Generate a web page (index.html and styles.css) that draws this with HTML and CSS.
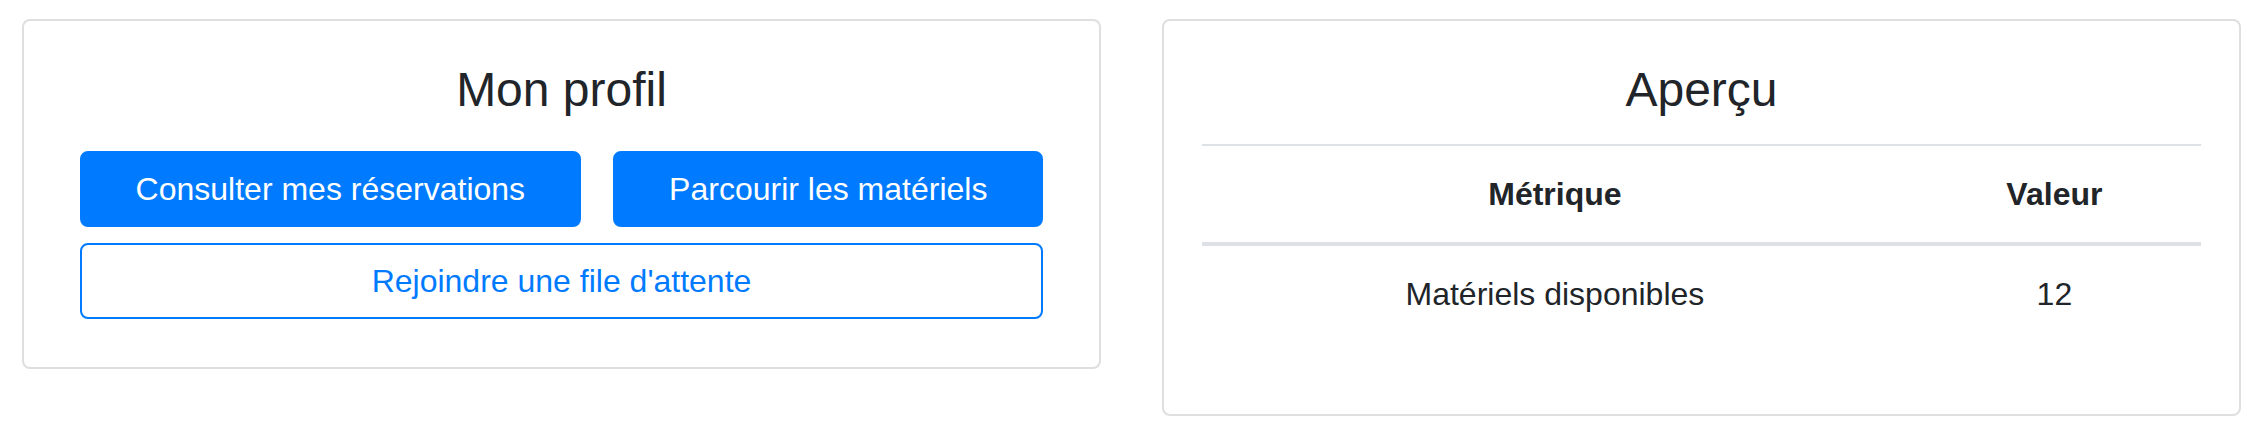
FILE: index.html
```html
<!DOCTYPE html>
<html lang="fr">
<head>
    <meta charset="UTF-8">
    <meta name="viewport" content="width=device-width, initial-scale=1.0">
    <title>Tableau de bord</title>
    <link rel="stylesheet" href="styles.css">
</head>
<body>
    <div class="dashboard">
        <section class="card">
            <h4 class="card-title">Mon profil</h4>
            <div class="actions">
                <div class="actions-row">
                    <a class="btn btn-primary" href="#">Consulter mes réservations</a>
                    <a class="btn btn-primary" href="#">Parcourir les matériels</a>
                </div>
                <a class="btn btn-outline" href="#">Rejoindre une file d'attente</a>
            </div>
        </section>

        <section class="card">
            <h4 class="card-title overview-title">Aperçu</h4>
            <table class="stats">
                <thead>
                    <tr>
                        <th>Métrique</th>
                        <th>Valeur</th>
                    </tr>
                </thead>
                <tbody>
                    <tr>
                        <td>Matériels disponibles</td>
                        <td>12</td>
                    </tr>
                </tbody>
            </table>
        </section>
    </div>
</body>
</html>
```

FILE: styles.css
```css
body {
    margin: 0;
    font-family: "Liberation Sans", Arial, sans-serif;
    color: #212529;
    background-color: #fff;
}
.dashboard {
    display: grid;
    grid-template-columns: 1fr 1fr;
    column-gap: 61px;
    align-items: start;
    padding: 19px 17px 0 22px;
}
.card {
    border: 2px solid rgba(0, 0, 0, 0.125);
    border-radius: 8px;
    padding: 40px 38px;
    background-color: #fff;
}
.card-title {
    margin: 0 0 32px;
    font-size: 48px;
    font-weight: 400;
    line-height: 1.2;
    text-align: center;
}
.overview-title {
    margin-bottom: 25px;
}
.actions {
    width: fit-content;
    margin: 0 auto 8px;
    display: flex;
    flex-direction: column;
    gap: 16px;
}
.actions-row {
    display: flex;
    gap: 32px;
}
.btn {
    display: block;
    padding: 12px 54px;
    font-size: 32px;
    line-height: 1.5;
    border: 2px solid #007bff;
    border-radius: 8px;
    text-align: center;
    text-decoration: none;
    white-space: nowrap;
}
.btn-primary {
    background-color: #007bff;
    color: #fff;
}
.btn-outline {
    background-color: transparent;
    color: #007bff;
}
.stats {
    width: 100%;
    border-collapse: collapse;
    margin-bottom: 32px;
    font-size: 32px;
    line-height: 1.5;
}
.stats th,
.stats td {
    padding: 24px;
    text-align: center;
    border-top: 2px solid #dee2e6;
}
.stats thead th {
    border-bottom: 4px solid #dee2e6;
    font-weight: 700;
}
```
